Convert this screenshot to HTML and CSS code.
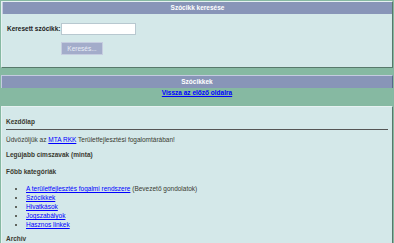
FILE: index.html
```html
<!DOCTYPE html>
<html lang="hu">
<head>
    <meta charset="UTF-8">
    <title>Szócikkek</title>
    <link rel="stylesheet" href="styles.css">
</head>
<body>
    <div class="panel search">
        <div class="panel-head">Szócikk keresése</div>
        <form class="search-form">
            <div class="row">
                <label for="q">Keresett szócikk:</label>
                <input type="text" id="q">
            </div>
            <div class="row">
                <span class="spacer"></span>
                <button type="button">Keresés...</button>
            </div>
        </form>
    </div>

    <div class="panel-head bar">Szócikkek</div>
    <div class="back"><a href="#">Vissza az előző oldalra</a></div>

    <div class="panel content">
        <h3>Kezdőlap</h3>
        <hr>
        <p>Üdvözöljük az <a href="#">MTA RKK</a> Területfejlesztési fogalomtárában!</p>
        <h4 class="latest">Legújabb címszavak (minta)</h4>
        <h4>Főbb kategóriák</h4>
        <ul>
            <li><a href="#">A területfejlesztés fogalmi rendszere</a> (Bevezető gondolatok)</li>
            <li><a href="#">Szócikkek</a></li>
            <li><a href="#">Hivatkások</a></li>
            <li><a href="#">Jogszabályok</a></li>
            <li><a href="#">Hasznos linkek</a></li>
        </ul>
        <h4>Archív</h4>
    </div>
</body>
</html>
```

FILE: styles.css
```css
* {
    box-sizing: border-box;
}

body {
    margin: 0;
    padding: 1px 1px 0 1px;
    background: #86b9a2;
    font-family: "Liberation Sans", Arial, sans-serif;
    font-size: 6.5px;
    line-height: 8px;
    color: #3a3a30;
}

.panel {
    background: #d4e8e9;
    border-top: 1px solid #e6f1f1;
    border-left: 1px solid #e6f1f1;
    border-right: 1px solid #57796b;
    border-bottom: 1px solid #57796b;
}

.panel-head {
    background: #8895b8;
    color: #fff;
    font-weight: bold;
    text-align: center;
    height: 12px;
    line-height: 12px;
    border-left: 1px solid #c4cbe0;
}

.bar {
    margin-top: 7px;
    border-right: 1px solid #5a6a88;
    border-top: 1px solid #c4cbe0;
    height: 13px;
}

.search-form {
    padding: 9px 5px 12px 5px;
}

.row {
    display: flex;
    align-items: center;
}

.row + .row {
    margin-top: 7px;
}

.row label,
.spacer {
    width: 54px;
    flex: none;
    white-space: nowrap;
    font-weight: bold;
    color: #222;
}

.row input {
    width: 75px;
    height: 12px;
    border: 1px solid #b8c8d0;
    background: #fff;
    padding: 0;
}

.row button {
    width: 42px;
    height: 13px;
    background: #a3acca;
    border: 1px solid #c6cde0;
    color: #e8ecf6;
    font-family: inherit;
    font-size: 6.5px;
    padding: 0;
}

.back {
    text-align: center;
    padding: 1px 0 9px;
    font-weight: bold;
}

.back a,
.content a {
    color: #0000ff;
}

.content {
    padding: 11px 4px 4px 4px;
    min-height: 140px;
}

.content h3,
.content h4 {
    font-size: 6.5px;
    margin: 0;
    font-weight: bold;
}

.content hr {
    border: 0;
    border-top: 1px solid #555;
    margin: 3px 0 6px;
}

.content p {
    margin: 0 0 7px;
}

.content h4.latest {
    margin-bottom: 9px;
}

.content ul {
    margin: 8px 0 6px;
    padding-left: 20px;
}

.content li {
    line-height: 9px;
}
```
